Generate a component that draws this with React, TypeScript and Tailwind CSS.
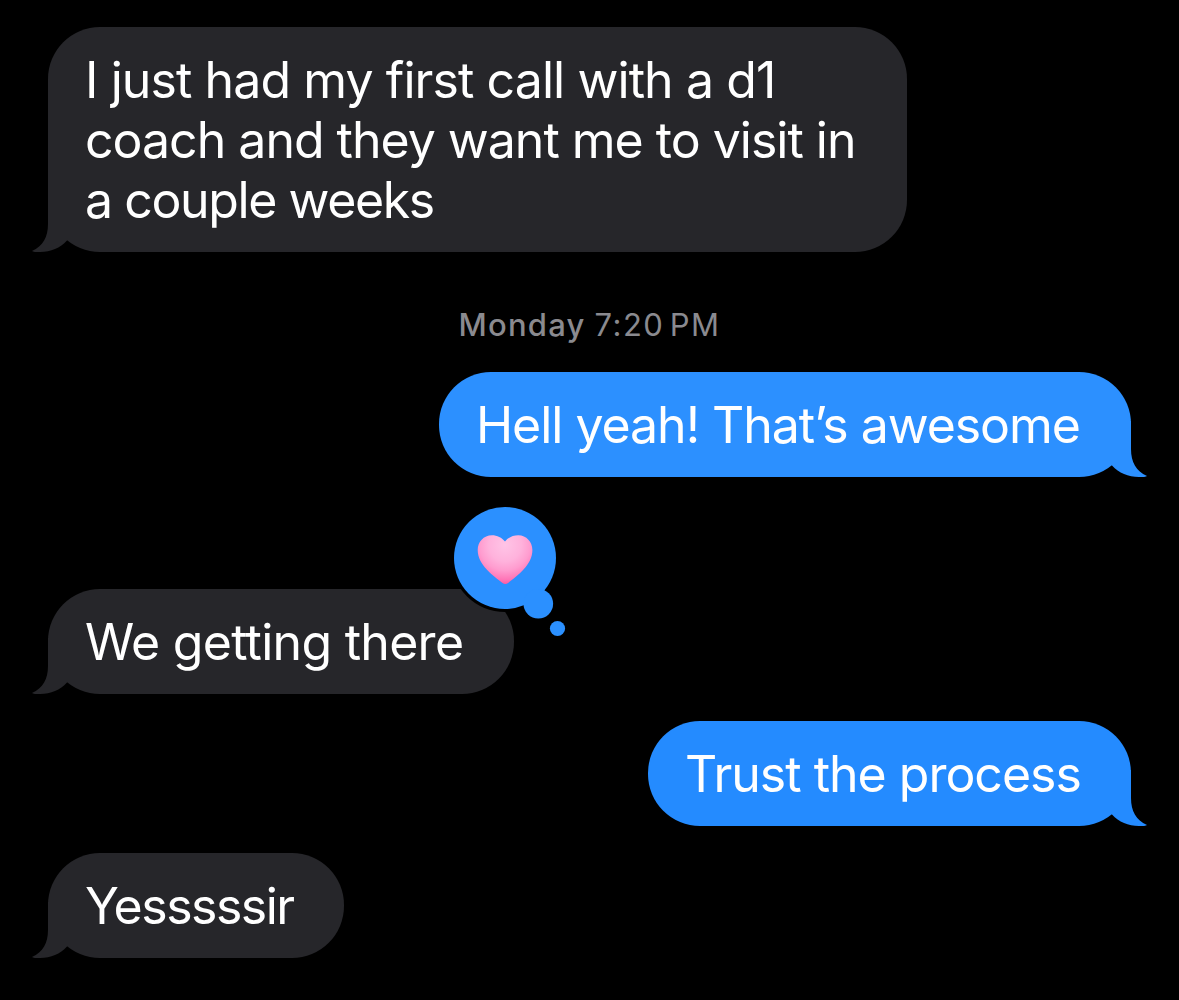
import clsx from "clsx";

interface Line {
  text: string;
  className?: string;
}

interface BubbleProps {
  lines: Line[];
  mine?: boolean;
  className: string;
  tailClassName: string;
  children?: React.ReactNode;
}

function Tail({ mine, className }: { mine?: boolean; className: string }) {
  return (
    <svg
      viewBox="0 0 40 56"
      className={clsx(
        "absolute bottom-0 h-14 w-10",
        mine ? "-right-4 -scale-x-100" : "-left-4",
        className
      )}
    >
      <path d="M16 0V28C16 41 11 50 0 55C1 56 4 56 8 56C19 56 28 52 35 44.5L40 40V0Z" />
    </svg>
  );
}

function Bubble({ lines, mine, className, tailClassName, children }: BubbleProps) {
  return (
    <div
      className={clsx(
        "relative rounded-[52px] pt-[23px] pb-[22px] pl-[37px] text-[50px] leading-[60px] text-white",
        mine ? "self-end" : "self-start",
        className
      )}
    >
      <Tail mine={mine} className={tailClassName} />
      {lines.map((line) => (
        <p key={line.text} className={clsx("relative whitespace-nowrap", line.className)}>
          {line.text}
        </p>
      ))}
      {children}
    </div>
  );
}

// Heart tapback with its two trailing dots
function HeartReaction() {
  return (
    <svg viewBox="0 0 120 140" className="absolute -top-[85px] left-[403px] h-[140px] w-[120px]">
      <defs>
        <radialGradient id="heart" gradientUnits="userSpaceOnUse" cx="54" cy="41" r="41">
          <stop offset="0" stopColor="#ffc4e6" />
          <stop offset="0.4" stopColor="#ffb2dc" />
          <stop offset="0.62" stopColor="#ff9ccf" />
          <stop offset="0.85" stopColor="#ff74b6" />
          <stop offset="1" stopColor="#fc4f9a" />
        </radialGradient>
      </defs>
      <circle cx="54" cy="54" r="54" fill="#000" />
      <circle cx="54" cy="54" r="51" fill="#2b90ff" />
      <circle cx="87.3" cy="99.7" r="14.8" fill="#2b90ff" />
      <circle cx="106.5" cy="124.5" r="7.6" fill="#2b90ff" />
      <path
        d="M54 37.5C51 33.5 46 31.2 41 31.2C32.5 31.2 26.7 38 26.7 46C26.7 61 42 71.5 51.5 79Q54.3 81.2 57.1 79C66.5 71.5 81.4 61 81.4 46C81.4 38 75.5 31.2 67.3 31.2C62 31.2 57 33.5 54 37.5Z"
        fill="url(#heart)"
      />
    </svg>
  );
}

export default function App() {
  return (
    <main className="flex h-[1000px] w-[1179px] flex-col overflow-hidden bg-black pt-[27px] pr-12 pl-12 font-[Inter,'Liberation_Sans',sans-serif]">
      <Bubble
        className="w-[859px] bg-[#26262a]"
        tailClassName="fill-[#26262a]"
        lines={[
          { text: "I just had my first call with a d1", className: "tracking-[-0.91px]" },
          { text: "coach and they want me to visit in", className: "tracking-[-1px]" },
          { text: "a couple weeks", className: "tracking-[-1.4px]" },
        ]}
      />

      <div className="mt-[53px] flex h-10 items-center justify-center gap-[9px] text-[31px] text-[#8a8a8f]">
        <span className="font-medium tracking-[1.2px]">Monday</span>
        <span className="tracking-[1.5px] [word-spacing:-5px]">7:20 PM</span>
      </div>

      <Bubble
        mine
        className="mt-[27px] w-[692px] bg-[#2c90ff]"
        tailClassName="fill-[#2c90ff]"
        lines={[{ text: "Hell yeah! That’s awesome", className: "tracking-[-1.04px]" }]}
      />
      <Bubble
        className="mt-28 w-[466px] bg-[#26262a]"
        tailClassName="fill-[#26262a]"
        lines={[{ text: "We getting there", className: "tracking-[-0.72px]" }]}
      >
        <HeartReaction />
      </Bubble>
      <Bubble
        mine
        className="mt-[27px] w-[483px] bg-[#248bff]"
        tailClassName="fill-[#248bff]"
        lines={[{ text: "Trust the process", className: "tracking-[-1px]" }]}
      />
      <Bubble
        className="mt-[27px] w-[296px] bg-[#26262a]"
        tailClassName="fill-[#26262a]"
        lines={[{ text: "Yesssssir", className: "tracking-[-1.5px]" }]}
      />
    </main>
  );
}
